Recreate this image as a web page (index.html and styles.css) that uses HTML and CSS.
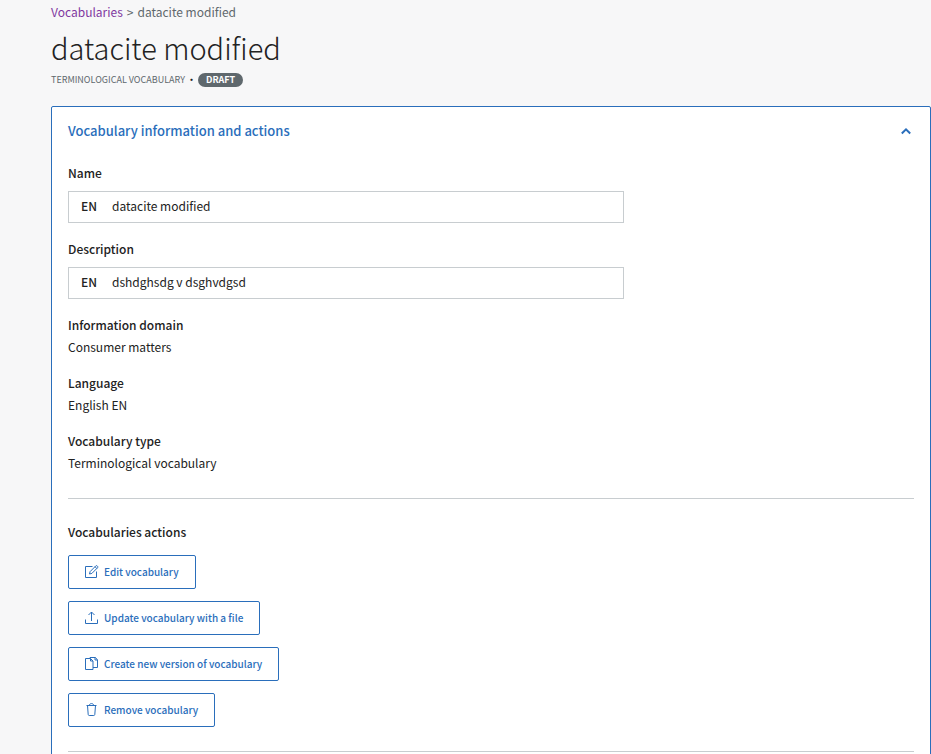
FILE: index.html
```html
<!DOCTYPE html>
<html lang="en">
<head>
<meta charset="utf-8">
<meta name="viewport" content="width=device-width, initial-scale=1">
<title>datacite modified</title>
<link rel="stylesheet" href="styles.css">
</head>
<body>
<nav class="breadcrumb" aria-label="Breadcrumb">
  <a href="#vocabularies">Vocabularies</a>
  <span class="separator">&gt;</span>
  <span>datacite modified</span>
</nav>
<main>
  <h1 class="title">datacite modified</h1>
  <div class="meta">
    <span>TERMINOLOGICAL VOCABULARY</span>
    <span class="dot">·</span>
    <span class="badge">DRAFT</span>
  </div>

  <section class="expander">
    <button class="expander-toggle" type="button" aria-expanded="true" aria-controls="info">
      <span>Vocabulary information and actions</span>
      <svg class="chevron" viewBox="0 0 16 16" aria-hidden="true"><path d="M3.800 10.500 8 6.300l4.200 4.200"/></svg>
    </button>
    <div class="expander-content" id="info">
      <dl class="fields">
        <div>
          <dt class="label">Name</dt>
          <dd class="box"><b>EN</b><span>datacite modified</span></dd>
        </div>
        <div>
          <dt class="label">Description</dt>
          <dd class="box"><b>EN</b><span>dshdghsdg v dsghvdgsd</span></dd>
        </div>
        <div>
          <dt class="label">Information domain</dt>
          <dd class="value">Consumer matters</dd>
        </div>
        <div>
          <dt class="label">Language</dt>
          <dd class="value">English EN</dd>
        </div>
        <div>
          <dt class="label">Vocabulary type</dt>
          <dd class="value">Terminological vocabulary</dd>
        </div>
      </dl>
      <hr>
      <h2 class="label">Vocabularies actions</h2>
      <div class="actions">
        <button class="action" type="button">
          <svg viewBox="0 0 14 14" aria-hidden="true"><path d="M7.500 1.500h-7v11h11v-6M4.500 9l.6-2.400 5.700-5.700c.4-.4 1-.4 1.400 0l.4.4c.4.4.4 1 0 1.400L6.900 8.400zM10 1.700l1.800 1.800"/></svg>
          Edit vocabulary
        </button>
        <button class="action" type="button">
          <svg viewBox="0 0 14 14" aria-hidden="true"><path d="M.5 8.500v4h12v-4M6.500 10V1M3.500 4l3-3 3 3"/></svg>
          Update vocabulary with a file
        </button>
        <button class="action" type="button">
          <svg viewBox="0 0 14 14" aria-hidden="true"><path d="M.5 1.500h5l2.500 2.500v8.500H.5zM5.500 1.500V4H8M5 1.500V.5h5.500l2 2.500v7.500H8M10 .5V3h2.500"/></svg>
          Create new version of vocabulary
        </button>
        <button class="action" type="button">
          <svg viewBox="0 0 14 14" aria-hidden="true"><path d="M1.500 2.500h10M4.300 2.500c0-2.600 4.400-2.600 4.400 0M2.500 2.500l.7 9c.1.700.5 1 1 1h4.600c.5 0 .9-.3 1-1l.7-9"/></svg>
          Remove vocabulary
        </button>
      </div>
      <hr>
    </div>
  </section>
</main>
</body>
</html>
```
FILE: styles.css
```css
* { box-sizing: border-box; }

body {
  margin: 0;
  padding: 2px 0 0 51px;
  background: #f7f7f8;
  color: #222;
  font: 400 12px/20px "Noto Sans CJK SC", "Noto Sans", sans-serif;
}

button { font: inherit; cursor: pointer; }

.breadcrumb { display: flex; gap: 4px; color: #5f686d; }
.breadcrumb a { color: #8137a0; text-decoration: none; }

.title {
  margin: 4px 0 0;
  font-size: 29px;
  line-height: 42px;
  font-weight: 200;
}

.meta {
  display: flex;
  align-items: center;
  gap: 2px;
  height: 16px;
  margin: 4px 0 18px;
  color: #5f686d;
  font-size: 9px;
  line-height: 14px;
}
.dot { color: #222; font-weight: 700; }
.badge {
  padding: 0 8px;
  border-radius: 7px;
  background: #5f686d;
  color: #fff;
  font-weight: 700;
}

.expander { border: 1px solid #2a6ebb; border-radius: 2px 2px 0 0; background: #fff; }
.expander-toggle {
  display: flex;
  justify-content: space-between;
  align-items: center;
  width: 100%;
  height: 48px;
  padding: 0 16px;
  border: 0;
  background: none;
  color: #2a6ebb;
  font-size: 13px;
  font-weight: 500;
}
.chevron { width: 16px; height: 16px; fill: none; stroke: #2a6ebb; stroke-width: 2; }
.expander-content { padding: 8px 16px 24px; }

.fields { display: grid; gap: 16px; margin: 0; }
.label { margin: 0; font-size: 12px; font-weight: 500; }
.box {
  display: flex;
  gap: 15px;
  max-width: 556px;
  margin: 8px 0 0;
  padding: 4px 12px 6px;
  border: 1px solid #c8cdd0;
}
.box b { font-weight: 500; }
.value { margin: 2px 0 0; }

hr { margin: 24px 0 23px; border: 0; border-top: 1px solid #c8cdd0; }

.fields + hr { margin-top: 25px; }

.actions { display: flex; flex-direction: column; align-items: flex-start; gap: 12px; margin-top: 13px; }
.action {
  display: flex;
  align-items: center;
  gap: 5px;
  height: 34px;
  padding: 0 16px;
  border: 1px solid #2a6ebb;
  border-radius: 2px;
  background: #fff;
  color: #2a6ebb;
  font-size: 10px;
  font-weight: 500;
}
.action svg { width: 14px; height: 14px; fill: none; stroke: #2a6ebb; stroke-width: 1; }
```
